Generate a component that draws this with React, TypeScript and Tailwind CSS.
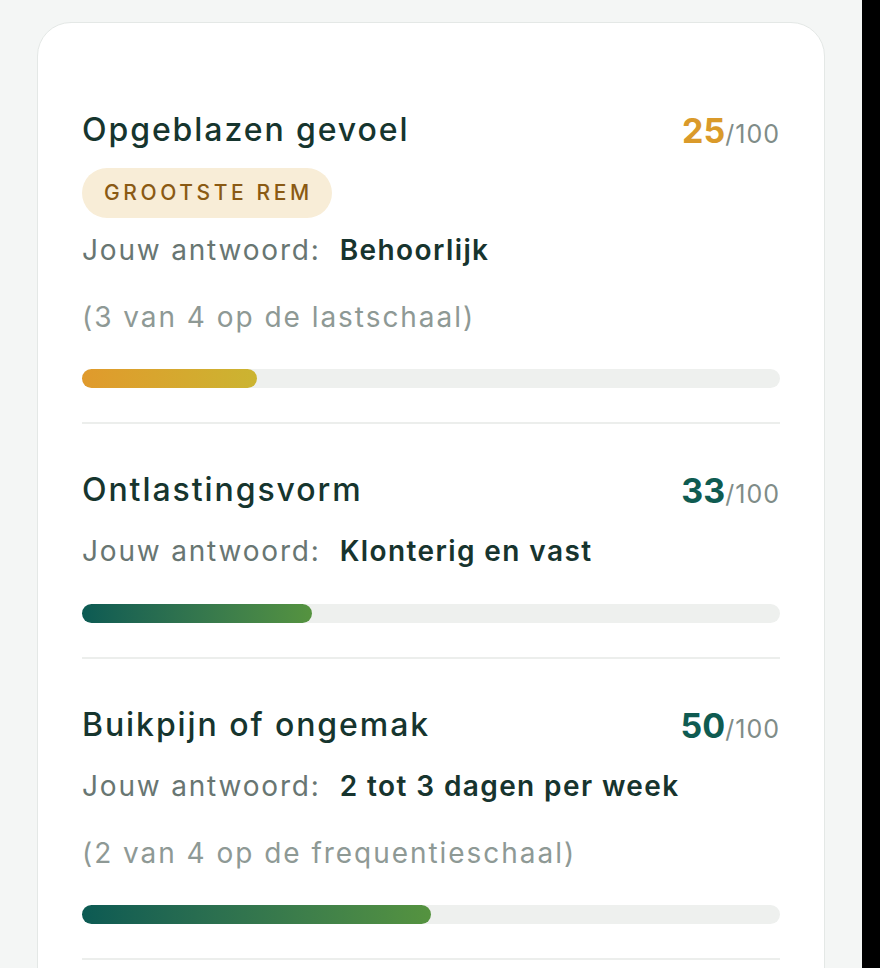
import React from "react";

type Item = {
  title: string;
  score: number;
  tone: "amber" | "teal";
  badge?: string;
  answer: string;
  scale?: string;
};

const items: Item[] = [
  {
    title: "Opgeblazen gevoel",
    score: 25,
    tone: "amber",
    badge: "GROOTSTE REM",
    answer: "Behoorlijk",
    scale: "(3 van 4 op de lastschaal)",
  },
  {
    title: "Ontlastingsvorm",
    score: 33,
    tone: "teal",
    answer: "Klonterig en vast",
  },
  {
    title: "Buikpijn of ongemak",
    score: 50,
    tone: "teal",
    answer: "2 tot 3 dagen per week",
    scale: "(2 van 4 op de frequentieschaal)",
  },
];

function ScoreRow({ item }: { item: Item }) {
  const amber = item.tone === "amber";
  return (
    <div className="border-b-2 border-[#eceeec] pt-[46px] pb-[34px]">
      <div className="flex h-[40px] items-center justify-between">
        <h3 className="text-[32px] font-medium tracking-[0.06em] text-[#16352e]">{item.title}</h3>
        <div className="flex items-baseline">
          <span className={`text-[34px] font-bold ${amber ? "text-[#da9a2a]" : "text-[#0f5b51]"}`}>
            {item.score}
          </span>
          <span className="text-[25px] tracking-[0.04em] text-[#7f8c88]">/100</span>
        </div>
      </div>

      {item.badge && (
        <div className="mt-[18px] inline-flex h-[50px] items-center rounded-full bg-[#f8edd7] pl-[22px] pr-[19px] text-[21px] font-medium tracking-[3.6px] text-[#8a5a14]">
          {item.badge}
        </div>
      )}

      <div className={`flex h-[36px] items-center text-[28px] ${item.badge ? "mt-[14px]" : "mt-[23px]"}`}>
        <span className="tracking-[0.065em] text-[#687672]">Jouw antwoord:</span>
        <span className="ml-[19px] font-semibold tracking-[0.05em] text-[#17342e]">{item.answer}</span>
      </div>

      {item.scale && (
        <div className="mt-[31px] flex h-[36px] items-center text-[28px] tracking-[0.07em] text-[#8e9995]">
          {item.scale}
        </div>
      )}

      <div className={`${item.scale ? "mt-[34px]" : "mt-[35px]"} h-[19px] w-full rounded-full bg-[#eef0ee]`}>
        <div
          className={`h-full rounded-full ${
            amber
              ? "bg-gradient-to-r from-[#e09a2c] to-[#cbb431]"
              : "bg-gradient-to-r from-[#0b5a53] to-[#55933f]"
          }`}
          style={{ width: `${item.score}%` }}
        />
      </div>
    </div>
  );
}

export default function App() {
  return (
    <div className="flex h-[968px] overflow-hidden bg-black" style={{ fontFamily: "Inter, 'Noto Sans', sans-serif" }}>
      <div className="w-[862px] shrink-0 bg-[#f4f6f5] px-[37px] pt-[22px]">
        <div className="rounded-[34px] border border-[#e4e8e6] bg-white px-[44px] pt-[41px] pb-[80px]">
          {items.map((item) => (
            <ScoreRow key={item.title} item={item} />
          ))}
        </div>
      </div>
    </div>
  );
}
